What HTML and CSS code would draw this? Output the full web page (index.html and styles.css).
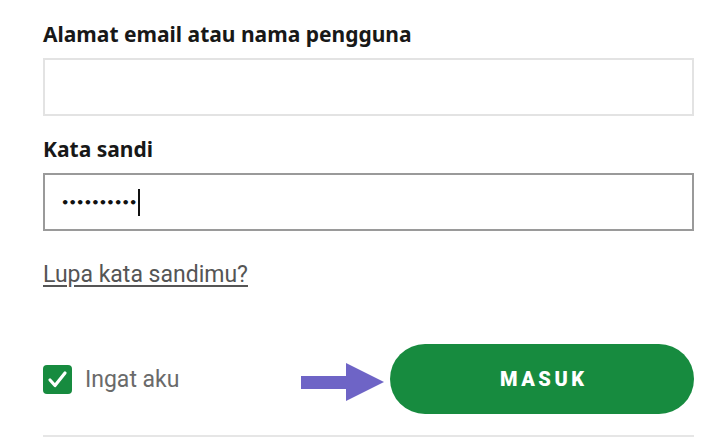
FILE: index.html
```html
<!DOCTYPE html>
<html>
<head>
<meta charset="utf-8" />
<title>Masuk</title>
<link rel="stylesheet" href="styles.css">
</head>
<body>
	<div id="login">
		<div class="field">
			<label class="field_label">Alamat email atau nama pengguna</label>
			<div class="field_input"></div>
		</div>
		<div class="field">
			<label class="field_label">Kata sandi</label>
			<div class="field_input field_focus">
				<span class="dots">••••••••••</span><span class="caret"></span>
			</div>
		</div>
		<a class="forgot" href="#">Lupa kata sandimu?</a>
		<div class="actions">
			<div class="remember">
				<span class="check">
					<svg width="29" height="29" viewBox="0 0 29 29"><path d="M7 15 L12 20.5 L22 8" fill="none" stroke="#fff" stroke-width="3.2" stroke-linecap="round" stroke-linejoin="round"/></svg>
				</span>
				<span class="remember_txt">Ingat aku</span>
			</div>
			<div class="submit_wrap">
				<svg class="arrow" width="84" height="38" viewBox="0 0 84 38"><polygon points="0,13 45,13 45,0 83,19 45,38 45,26 0,26" fill="#6e64c6"/></svg>
				<button class="submit">MASUK</button>
			</div>
		</div>
		<div class="divider"></div>
	</div>
</body>
</html>
```

FILE: styles.css
```css
*{ padding:0; margin:0; box-sizing:border-box; }
body{ background:#fff; font-family:Roboto, "Liberation Sans", sans-serif; }
a{ text-decoration:none; }
#login{ width:651px; margin-left:43px; padding-top:20px; display:flex; flex-direction:column; }
.field{ display:flex; flex-direction:column; margin-bottom:19px; }
.field_label{ font-family:"Noto Sans", sans-serif; font-weight:700; font-size:21px; line-height:28px; color:#181818; margin-bottom:10px; }
.field_input{ height:58px; border:2px solid #e3e3e3; display:flex; align-items:center; padding-left:16px; }
.field_focus{ border-color:#9a9a9a; }
.dots{ font-family:"DejaVu Sans", sans-serif; font-weight:700; font-size:13px; letter-spacing:-0.75px; color:#111; }
.caret{ width:2px; height:27px; background:#111; margin-left:1px; }
.forgot{ align-self:flex-start; margin-top:11px; font-size:23px; line-height:28px; color:#555; text-decoration:underline; text-underline-offset:3px; }
.actions{ display:flex; align-items:center; justify-content:space-between; margin-top:55px; }
.remember{ display:flex; align-items:center; gap:13px; }
.check{ width:29px; height:29px; background:#178b3f; border-radius:4px; display:flex; align-items:center; justify-content:center; }
.remember_txt{ font-size:23px; color:#6a6a6a; }
.submit_wrap{ display:flex; align-items:center; gap:5px; }
.arrow{ margin-top:6px; }
.submit{ width:304px; height:70px; border:none; border-radius:35px; background:#178b3f; color:#fff; font-family:Roboto, sans-serif; font-weight:900; font-size:20px; letter-spacing:3.5px; padding-left:3.5px; }
.divider{ height:2px; background:#e6e6e6; margin-top:21px; }
```
